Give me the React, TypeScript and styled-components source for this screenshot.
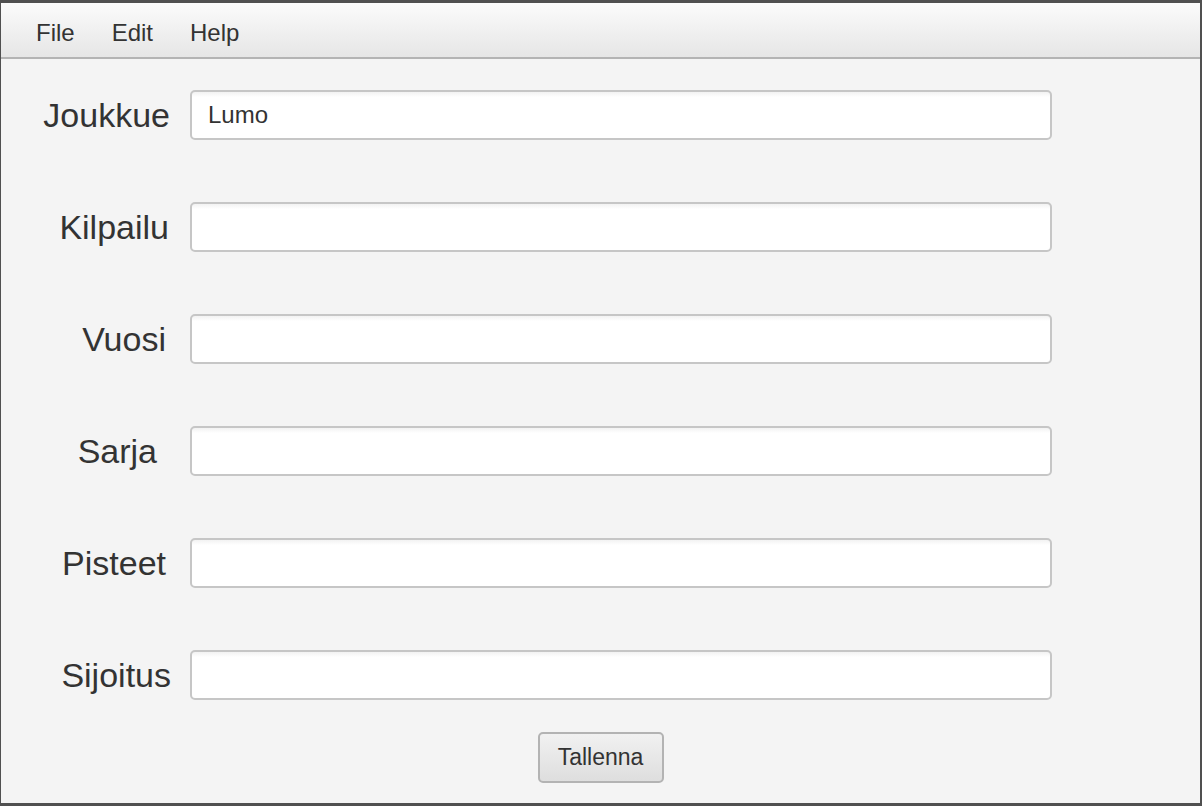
import React, { useState } from 'react'
import styled, { createGlobalStyle } from 'styled-components'

const GlobalStyle = createGlobalStyle`
    html, body {
        margin: 0;
        padding: 0;
        background: #4a4a4a;
    }
    * {
        box-sizing: border-box;
    }
`

const Window = styled.div`
    width: 1202px;
    height: 806px;
    display: flex;
    flex-direction: column;
    background-color: #f4f4f4;
    border-top: 3px solid #505050;
    border-left: 1px solid #505050;
    border-right: 2px solid #505050;
    border-bottom: 3px solid #505050;
    font-family: "Liberation Sans", Arial, sans-serif;
    color: #333333;
`

const MenuBar = styled.div`
    height: 56px;
    display: flex;
    align-items: center;
    padding-left: 23px;
    padding-top: 5px;
    background: linear-gradient(#fbfbfb, #e6e6e6);
    border-bottom: 2px solid #b4b4b4;
`

const MenuItem = styled.div`
    font-size: 24px;
    padding: 0 12px;
    margin-right: 13px;
    color: #333333;
    cursor: default;
`

const Form = styled.div`
    display: grid;
    grid-template-columns: 189px 862px;
    row-gap: 62px;
    padding-top: 31px;
`

const Label = styled.div<{ trail: number }>`
    justify-self: end;
    align-self: center;
    margin-right: ${props => props.trail}px;
    font-size: 34px;
    color: #333333;
`

const Field = styled.input`
    height: 50px;
    width: 100%;
    padding: 0 16px;
    font-family: "Liberation Sans", Arial, sans-serif;
    font-size: 24px;
    color: #333333;
    background: linear-gradient(#f2f2f2 0, #ffffff 5px);
    border: 2px solid #c6c6c6;
    border-radius: 5px;
    outline: none;
`

const Footer = styled.div`
    display: flex;
    justify-content: center;
    padding-top: 32px;
`

const Button = styled.button`
    width: 126px;
    height: 51px;
    font-family: "Liberation Sans", Arial, sans-serif;
    font-size: 23px;
    color: #333333;
    background: linear-gradient(#f1f1f1, #dedede);
    border: 2px solid #b3b3b3;
    border-radius: 5px;
    cursor: pointer;
`

const rows = [
    { label: 'Joukkue', trail: 20, value: 'Lumo' },
    { label: 'Kilpailu', trail: 21, value: '' },
    { label: 'Vuosi', trail: 24, value: '' },
    { label: 'Sarja', trail: 33, value: '' },
    { label: 'Pisteet', trail: 24, value: '' },
    { label: 'Sijoitus', trail: 19, value: '' },
]

const App: React.FC = () => {
    const [values, setValues] = useState(rows.map((r) => r.value))

    const handleChange = (i: number, v: string) => {
        setValues(values.map((old, j) => (j === i ? v : old)))
    }

    return (
        <>
            <GlobalStyle />
            <Window>
                <MenuBar>
                    <MenuItem>File</MenuItem>
                    <MenuItem>Edit</MenuItem>
                    <MenuItem>Help</MenuItem>
                </MenuBar>
                <Form>
                    {rows.map((row, i) => (
                        <React.Fragment key={row.label}>
                            <Label trail={row.trail}>{row.label}</Label>
                            <Field value={values[i]} onChange={(e) => handleChange(i, e.target.value)} />
                        </React.Fragment>
                    ))}
                </Form>
                <Footer>
                    <Button>Tallenna</Button>
                </Footer>
            </Window>
        </>
    )
}

export default App
